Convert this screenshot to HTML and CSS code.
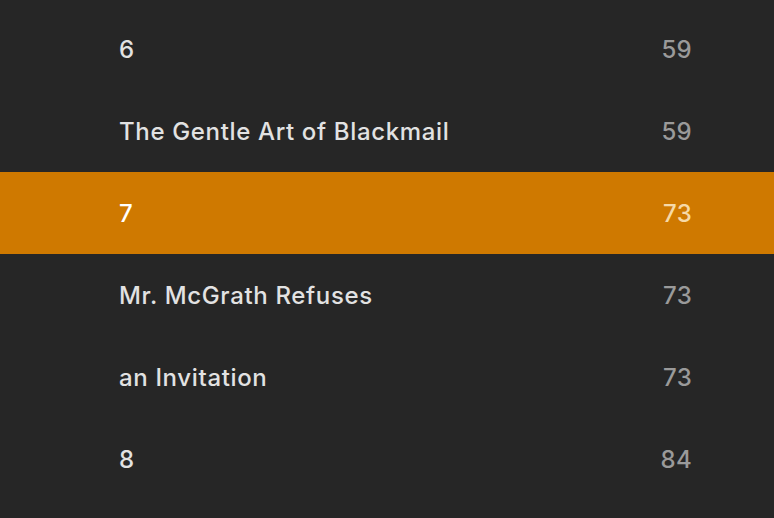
FILE: index.html
```html
<!DOCTYPE html>
<html>
<head>
<meta charset="utf-8">
<link rel="stylesheet" href="styles.css">
</head>
<body>
<div class="toc">
  <div class="row"><span class="title">6</span><span class="page">59</span></div>
  <div class="row"><span class="title">The Gentle Art of Blackmail</span><span class="page">59</span></div>
  <div class="row active"><span class="title">7</span><span class="page">73</span></div>
  <div class="row"><span class="title">Mr. McGrath Refuses</span><span class="page">73</span></div>
  <div class="row"><span class="title">an Invitation</span><span class="page">73</span></div>
  <div class="row"><span class="title">8</span><span class="page">84</span></div>
</div>
</body>
</html>
```
FILE: styles.css
```css
html, body {
  margin: 0;
  padding: 0;
  background: #262626;
  height: 100%;
  overflow: hidden;
}
.toc {
  padding-top: 8px;
  display: flex;
  flex-direction: column;
  font-family: Inter, "Noto Sans", sans-serif;
  font-size: 24px;
  font-weight: 500;
  letter-spacing: 0.65px;
}
.row {
  height: 82px;
  display: flex;
  align-items: center;
  justify-content: space-between;
  padding: 0 82px 0 119px;
}
.title {
  color: #e2e2e2;
}
.page {
  color: #9a9a9a;
  letter-spacing: 0.3px;
}
.row.active {
  background: #cf7900;
}
.row.active .title {
  color: #ffffff;
}
.row.active .page {
  color: #f6d9a8;
}
```
